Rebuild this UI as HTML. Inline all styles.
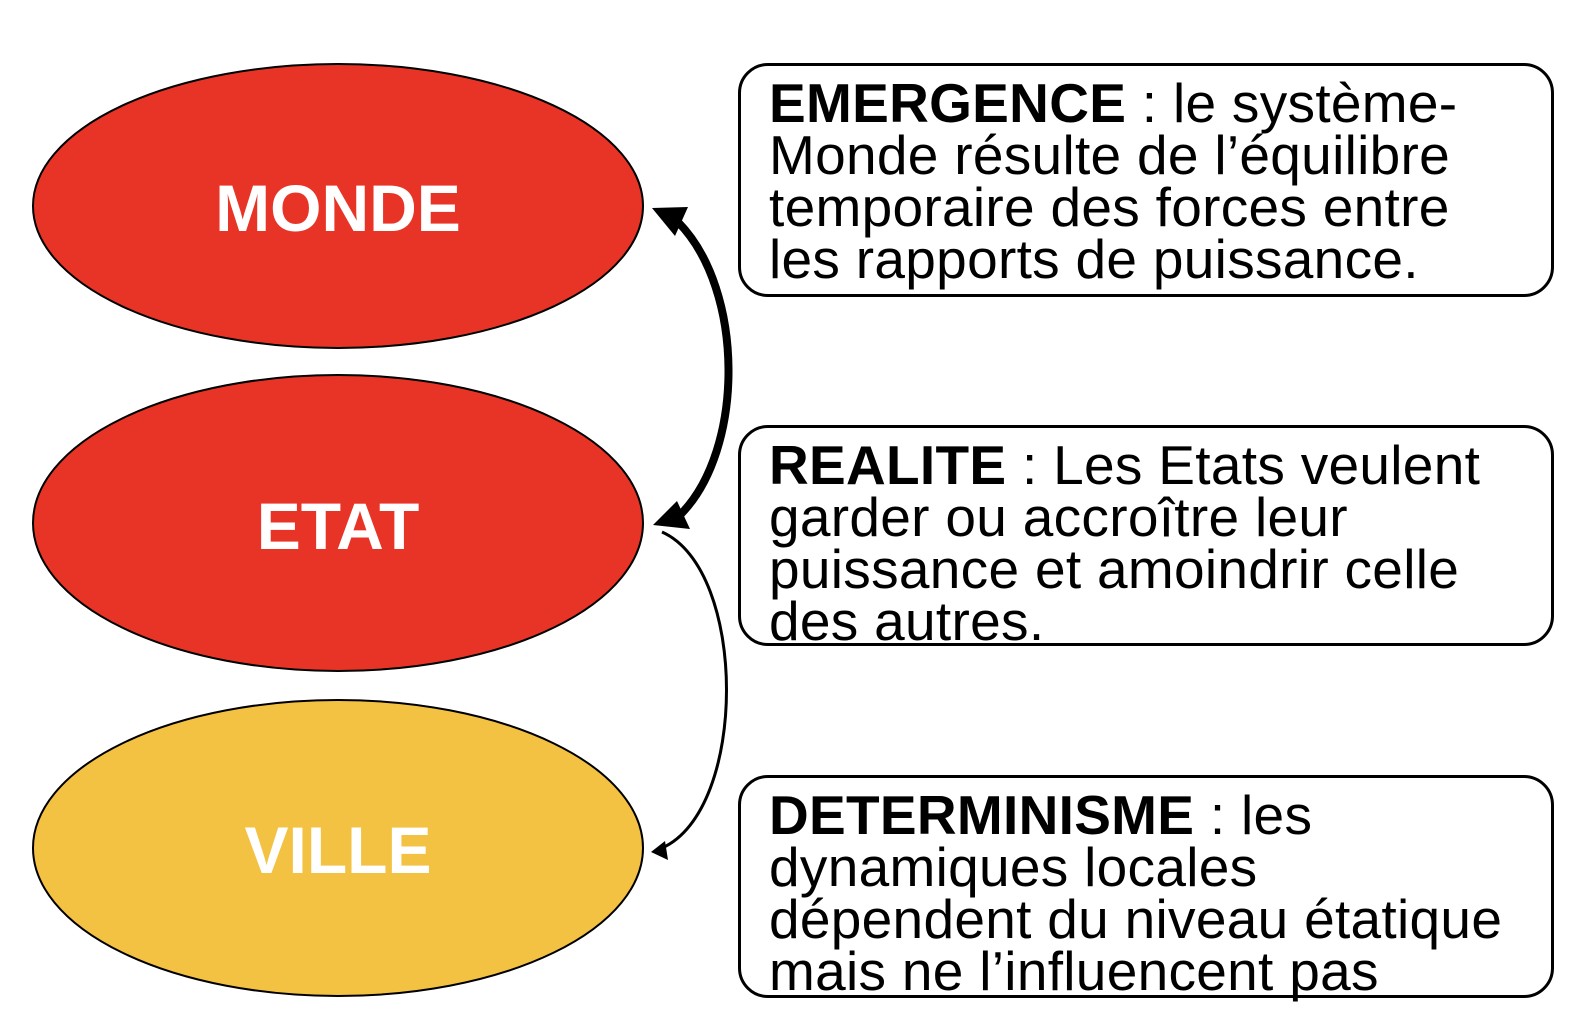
<!DOCTYPE html><html><head><meta charset="utf-8"><style>
body{margin:0;width:1586px;height:1030px;background:#fff;position:relative;overflow:hidden;font-family:"Liberation Sans",Arial,sans-serif}
.box{position:absolute;left:738px;width:816px;border:3px solid #000;border-radius:30px;box-sizing:border-box;padding:11px 0 0 28px;font-size:55px;line-height:52px;color:#000;letter-spacing:0.3px;white-space:nowrap}
.box b{font-weight:bold}
</style></head><body>
<svg width="1586" height="1030" style="position:absolute;left:0;top:0">
<ellipse cx="338" cy="206" rx="305" ry="142" fill="#e83426" stroke="#000" stroke-width="2"/>
<ellipse cx="338" cy="523" rx="305" ry="148" fill="#e83426" stroke="#000" stroke-width="2"/>
<ellipse cx="338" cy="848" rx="305" ry="148" fill="#f4c243" stroke="#000" stroke-width="2"/>
<g font-family="Liberation Sans,Arial,sans-serif" font-weight="bold" font-size="66" fill="#fff" text-anchor="middle">
<text x="338" y="231">MONDE</text><text x="338" y="549">ETAT</text><text x="338" y="873">VILLE</text></g>
<path d="M678 222 C745 290 745 450 680 515" fill="none" stroke="#000" stroke-width="8"/>
<polygon points="652,208 688,207 675,236" fill="#000"/>
<polygon points="653,525 677,501 690,529" fill="#000"/>
<path d="M662 532 C748 570 748 810 662 848" fill="none" stroke="#000" stroke-width="3"/>
<polygon points="651,852 665,841 668,860" fill="#000"/>
</svg>
<div class="box" style="top:63px;height:234px"><b>EMERGENCE</b> : le système-<br>Monde résulte de l’équilibre<br>temporaire des forces entre<br>les rapports de puissance.</div>
<div class="box" style="top:425px;height:221px"><b>REALITE</b> : Les Etats veulent<br>garder ou accroître leur<br>puissance et amoindrir celle<br>des autres.</div>
<div class="box" style="top:775px;height:223px"><b>DETERMINISME</b> : les<br>dynamiques locales<br>dépendent du niveau étatique<br>mais ne l’influencent pas</div>
</body></html>
